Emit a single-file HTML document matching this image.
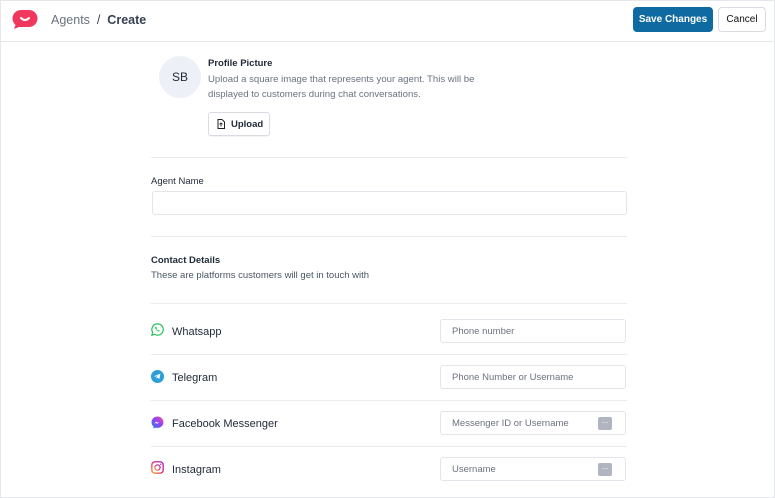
<!DOCTYPE html><html><head><style>
*{box-sizing:border-box;margin:0;padding:0}
body{width:775px;height:498px;overflow:hidden;background:#fff;font-family:"Liberation Sans",sans-serif;color:#1f2937;position:relative}
.a{position:absolute}
.hr{position:absolute;left:151px;width:476px;height:1px;background:#e9ebef}
.inp{position:absolute;border:1px solid #e2e5ea;border-radius:3px;background:#fff;font-size:9.5px;color:#6b7280;padding-left:11px;display:flex;align-items:center}
.lbl{position:absolute;left:172px;font-size:11px;color:#1f2937}
.dots{position:absolute;right:13px;top:5px;width:14px;height:13px;background:#b0b5bf;border-radius:2px;color:#fff;font-size:8px;line-height:8px;text-align:center}
</style></head><body>
<div class="a" style="left:0;top:0;width:775px;height:498px;border:1px solid #e5e7eb"></div>
<div class="a" style="left:0;top:0;width:775px;height:42px;border-bottom:1px solid #e5e7eb"></div>
<svg class="a" style="left:12px;top:9px" width="26" height="20" viewBox="0 0 26 20"><path d="M9 1h8a8.5 8.5 0 0 1 0 17H7l-5 2 1.5-4A8.5 8.5 0 0 1 9 1z" fill="#f0385e"/><path d="M9 9q4 4 8 0" stroke="#fff" stroke-width="2" fill="none" stroke-linecap="round"/></svg>
<div class="a" style="left:51px;top:13px;font-size:12.5px;color:#6b7280">Agents <span style="color:#374151">&nbsp;/&nbsp;</span> <b style="color:#374151">Create</b></div>
<div class="a" style="left:633px;top:7px;width:80px;height:25px;background:#0e6aa0;border-radius:4px;color:#fff;font-size:10px;font-weight:bold;text-align:center;line-height:26px">Save Changes</div>
<div class="a" style="left:718px;top:7px;width:48px;height:25px;border:1px solid #d9dce2;border-radius:4px;font-size:10px;text-align:center;line-height:24px;color:#111">Cancel</div>
<div class="a" style="left:159px;top:56px;width:42px;height:42px;border-radius:50%;background:#eef0f7;font-size:12px;text-align:center;line-height:42px;color:#1f2937">SB</div>
<div class="a" style="left:208px;top:58px;font-size:9.5px;font-weight:bold">Profile Picture</div>
<div class="a" style="left:208px;top:72px;font-size:9.6px;color:#6b7280;line-height:15px;width:285px">Upload a square image that represents your agent. This will be displayed to customers during chat conversations.</div>
<div class="a" style="left:208px;top:112px;width:62px;height:24px;border:1px solid #d9dce2;border-radius:3px;font-size:9.5px;font-weight:bold;line-height:23px;padding-left:22px;box-shadow:0 1px 1px rgba(0,0,0,.05)">Upload</div>
<svg class="a" style="left:217px;top:119px" width="8" height="10" viewBox="0 0 8 10"><path d="M1 .5h4l2.5 2.5v6.5h-6.5z" fill="none" stroke="#222" stroke-width="1"/><path d="M4 7.5V4M2.5 5.3L4 4l1.5 1.3" fill="none" stroke="#222" stroke-width=".9"/></svg>
<div class="hr" style="top:157px"></div>
<div class="a" style="left:151px;top:176px;font-size:9.5px">Agent Name</div>
<div class="inp" style="left:152px;top:191px;width:475px;height:24px"></div>
<div class="hr" style="top:236px"></div>
<div class="a" style="left:151px;top:255px;font-size:9.5px;font-weight:bold">Contact Details</div>
<div class="a" style="left:151px;top:270px;font-size:9.5px;color:#4b5563">These are platforms customers will get in touch with</div>
<div class="hr" style="top:303px"></div>
<svg class="a" style="left:151px;top:323px" width="13" height="13" viewBox="0 0 12 12"><path d="M6 .8a5.2 5.2 0 0 0-4.5 7.8L.8 11.2l2.7-.7A5.2 5.2 0 1 0 6 .8z" fill="none" stroke="#25c05a" stroke-width="1.1"/><path d="M4 3.5q-.6.6 0 1.8 1 1.8 2.8 2.4 1 .3 1.4-.5l-1-.7-.6.4Q5.5 6.3 5 5.3l.4-.6-.6-1.2z" fill="#25c05a"/></svg>
<div class="lbl" style="top:326px">Whatsapp</div>
<div class="inp" style="left:440px;top:319px;width:186px;height:24px">Phone number</div>
<div class="hr" style="top:354px"></div>
<svg class="a" style="left:151px;top:370px" width="13" height="13" viewBox="0 0 12 12"><circle cx="6" cy="6" r="6" fill="#2a9fd8"/><path d="M2.7 5.8l6-2.4-1 5-1.8-1.4-1 .9.1-1.4 2-1.9-2.6 1.5z" fill="#fff"/></svg>
<div class="lbl" style="top:372px">Telegram</div>
<div class="inp" style="left:440px;top:365px;width:186px;height:24px">Phone Number or Username</div>
<div class="hr" style="top:400px"></div>
<svg class="a" style="left:151px;top:416px" width="13" height="13" viewBox="0 0 12 12"><defs><linearGradient id="g" x1="0" y1="1" x2="1" y2="0"><stop offset="0" stop-color="#1a7df5"/><stop offset=".6" stop-color="#a33ef0"/><stop offset="1" stop-color="#f35a7a"/></linearGradient></defs><path d="M6 .5C2.9.5.5 2.8.5 5.8c0 1.6.7 3 1.8 3.9v2l1.9-1c.6.2 1.2.3 1.8.3 3.1 0 5.5-2.3 5.5-5.2S9.1.5 6 .5z" fill="url(#g)"/><path d="M2.8 7.3l2-2.2 1.2 1 1.8-1-2 2.2-1.2-1z" fill="#fff"/></svg>
<div class="lbl" style="top:418px">Facebook Messenger</div>
<div class="inp" style="left:440px;top:411px;width:186px;height:24px">Messenger ID or Username<div class="dots">...</div></div>
<div class="hr" style="top:446px"></div>
<svg class="a" style="left:151px;top:461px" width="13" height="13" viewBox="0 0 11 11"><defs><linearGradient id="h" x1="0" y1="1" x2="1" y2="0"><stop offset="0" stop-color="#f7a23a"/><stop offset=".5" stop-color="#e3306c"/><stop offset="1" stop-color="#a12fd0"/></linearGradient></defs><rect x=".7" y=".7" width="9.6" height="9.6" rx="2.6" fill="none" stroke="url(#h)" stroke-width="1.2"/><circle cx="5.5" cy="5.5" r="2.2" fill="none" stroke="url(#h)" stroke-width="1.1"/><circle cx="8.2" cy="2.8" r=".6" fill="#c2307e"/></svg>
<div class="lbl" style="top:464px">Instagram</div>
<div class="inp" style="left:440px;top:457px;width:186px;height:24px">Username<div class="dots">...</div></div>
</body></html>
